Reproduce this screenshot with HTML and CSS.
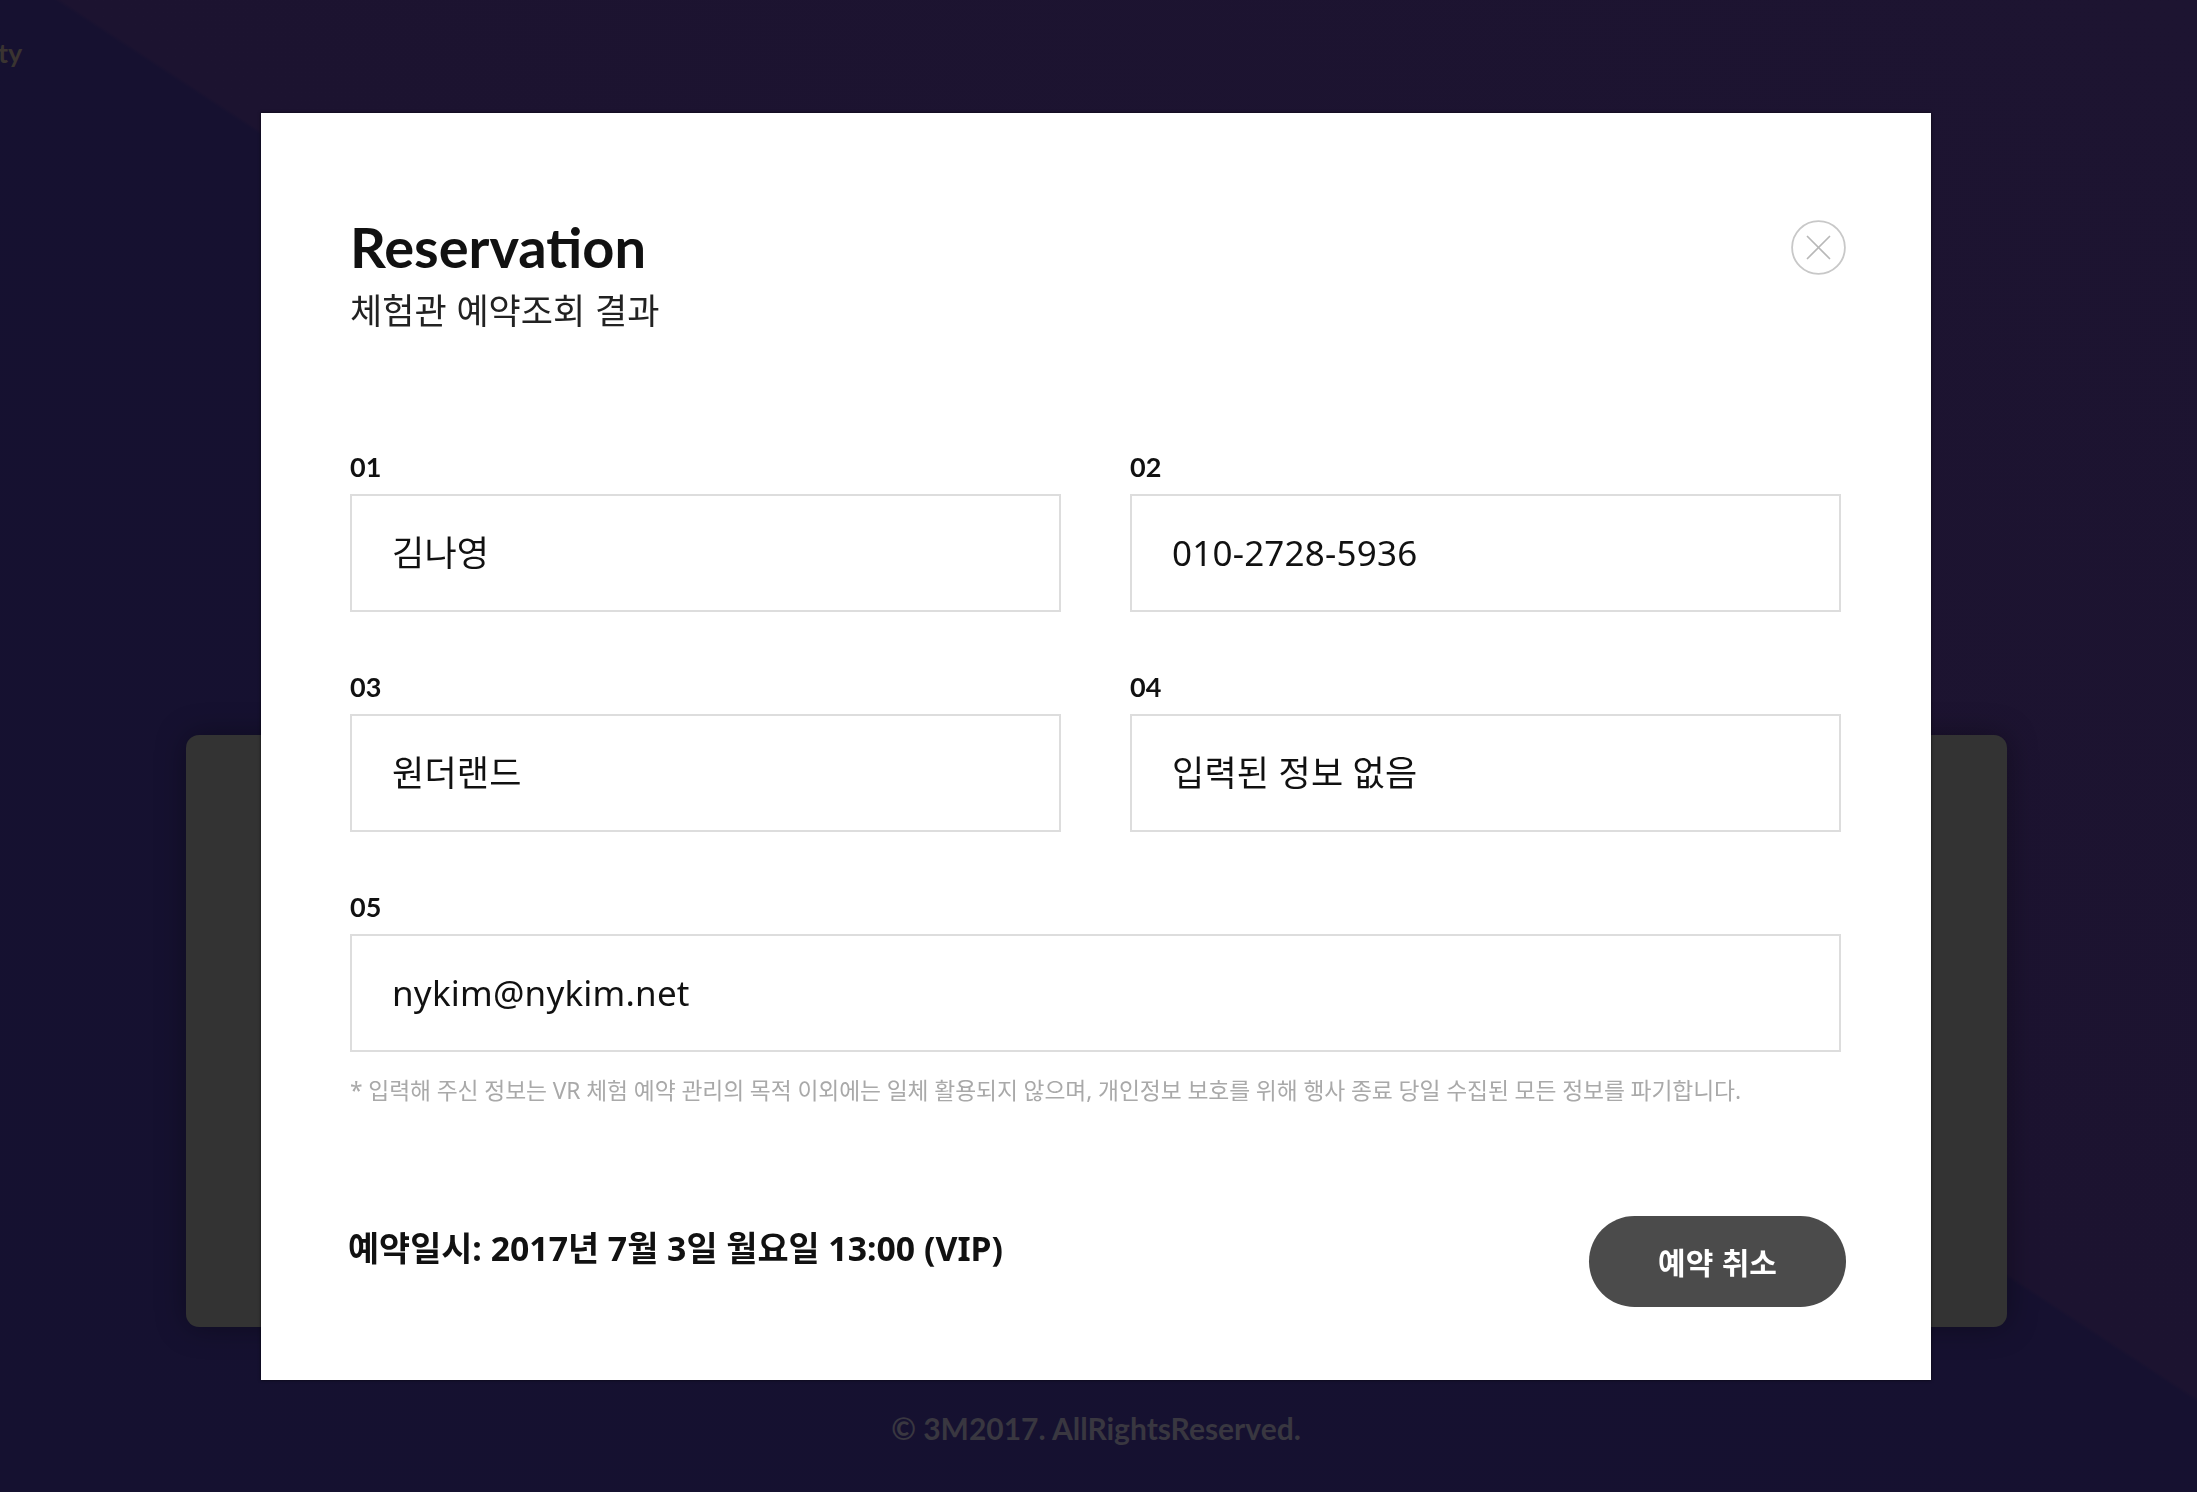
FILE: index.html
```html
<!DOCTYPE html>
<html lang="ko">
<head>
<meta charset="utf-8">
<title>Reservation</title>
<link rel="stylesheet" href="styles.css">
</head>
<body>
<div class="page">
  <header class="site-header"><span class="nav-item">ty</span></header>
  <main class="card"></main>
  <footer class="site-footer">© 3M2017. AllRightsReserved.</footer>
</div>
<div class="overlay">
  <section class="modal">
    <div class="modal-head">
      <div class="titles">
        <h1 class="title">Reservation</h1>
        <p class="subtitle">체험관 예약조회 결과</p>
      </div>
      <button class="close" aria-label="닫기">
        <svg width="55" height="55" viewBox="0 0 55 55">
          <circle cx="27.5" cy="27.5" r="26.4" fill="none" stroke="#c8c8c8" stroke-width="1.8"/>
          <path d="M16.5 16.5 L38.5 38.5 M38.5 16.5 L16.5 38.5" stroke="#b8b8b8" stroke-width="1.7" stroke-linecap="round"/>
        </svg>
      </button>
    </div>
    <div class="fields">
      <div class="field"><div class="label">01</div><div class="value">김나영</div></div>
      <div class="field"><div class="label">02</div><div class="value">010-2728-5936</div></div>
      <div class="field"><div class="label">03</div><div class="value">원더랜드</div></div>
      <div class="field"><div class="label">04</div><div class="value">입력된 정보 없음</div></div>
      <div class="field wide"><div class="label">05</div><div class="value">nykim@nykim.net</div></div>
    </div>
    <p class="notice">* 입력해 주신 정보는 VR 체험 예약 관리의 목적 이외에는 일체 활용되지 않으며, 개인정보 보호를 위해 행사 종료 당일 수집된 모든 정보를 파기합니다.</p>
    <div class="modal-foot">
      <p class="datetime">예약일시: 2017년 7월 3일 월요일 13:00 (VIP)</p>
      <button class="cancel">예약 취소</button>
    </div>
  </section>
</div>
</body>
</html>
```

FILE: styles.css
```css
html, body {
  margin: 0;
  padding: 0;
}

body {
  width: 2197px;
  height: 1492px;
  overflow: hidden;
  background-color: #161130;
  background-image: linear-gradient(33.2deg, #151130 0, #161130 1278px, #1c1330 1282px, #1d1431 100%);
  font-family: "Noto Sans", "Noto Sans CJK KR", sans-serif;
}

.page {
  display: flex;
  flex-direction: column;
}

.site-header {
  height: 120px;
  box-sizing: border-box;
  padding-top: 38px;
}

.nav-item {
  display: block;
  margin-left: -2px;
  font: 700 27px/30px "Lato", sans-serif;
  color: #3a3431;
}

.card {
  margin: 615px 0 0 186px;
  width: 1821px;
  height: 592px;
  background: #333333;
  border-radius: 13px;
  box-shadow: 0 0 30px rgba(0, 0, 0, 0.35);
}

.site-footer {
  margin-top: 81px;
  text-align: center;
  padding-right: 5px;
  font: 700 30px/40px "Lato", sans-serif;
  color: #393740;
}

.overlay {
  position: fixed;
  inset: 0;
  display: flex;
  align-items: center;
  justify-content: center;
  padding-right: 5px;
}

.modal {
  width: 1670px;
  box-sizing: border-box;
  padding: 106px 90px 73px 89px;
  background: #ffffff;
  box-shadow: 0 0 3px rgba(0, 0, 0, 0.7);
}

.modal-head {
  display: flex;
  justify-content: space-between;
  align-items: flex-start;
}

.title {
  margin: 0;
  font: 700 56px/56px "Lato", sans-serif;
  color: #111111;
}

.subtitle {
  margin: 14px 0 0;
  font: 400 35px/40px "Noto Sans CJK KR", sans-serif;
  color: #222222;
}

.close {
  width: 55px;
  height: 55px;
  margin: 1px -5px 0 0;
  padding: 0;
  border: 0;
  background: none;
  display: flex;
}

.fields {
  margin-top: 123px;
  display: grid;
  grid-template-columns: 1fr 1fr;
  column-gap: 69px;
  row-gap: 60px;
}

.field.wide {
  grid-column: 1 / -1;
}

.label {
  margin-bottom: 12px;
  font: 700 27px/30px "Lato", sans-serif;
  color: #111111;
}

.value {
  height: 118px;
  box-sizing: border-box;
  border: 2px solid #dddddd;
  padding-left: 40px;
  display: flex;
  align-items: center;
  font: 400 35px/50px "Noto Sans", "Noto Sans CJK KR", sans-serif;
  letter-spacing: 0.2px;
  color: #111111;
}

.notice {
  margin: 24px 0 0;
  font: 400 22.8px/30px "Noto Sans", "Noto Sans CJK KR", sans-serif;
  letter-spacing: -0.1px;
  color: #a9a9a9;
}

.modal-foot {
  margin-top: 110px;
  display: flex;
  justify-content: space-between;
  align-items: flex-start;
}

.datetime {
  margin: 7px 0 0 -2px;
  font: 700 33.8px/50px "Noto Sans", "Noto Sans CJK KR", sans-serif;
  color: #111111;
}

.cancel {
  width: 257px;
  height: 91px;
  margin-right: -5px;
  border: 0;
  border-radius: 46px;
  background: #4b4b4b;
  color: #ffffff;
  font: 700 30px/40px "Noto Sans CJK KR", sans-serif;
  padding: 0;
}
```
